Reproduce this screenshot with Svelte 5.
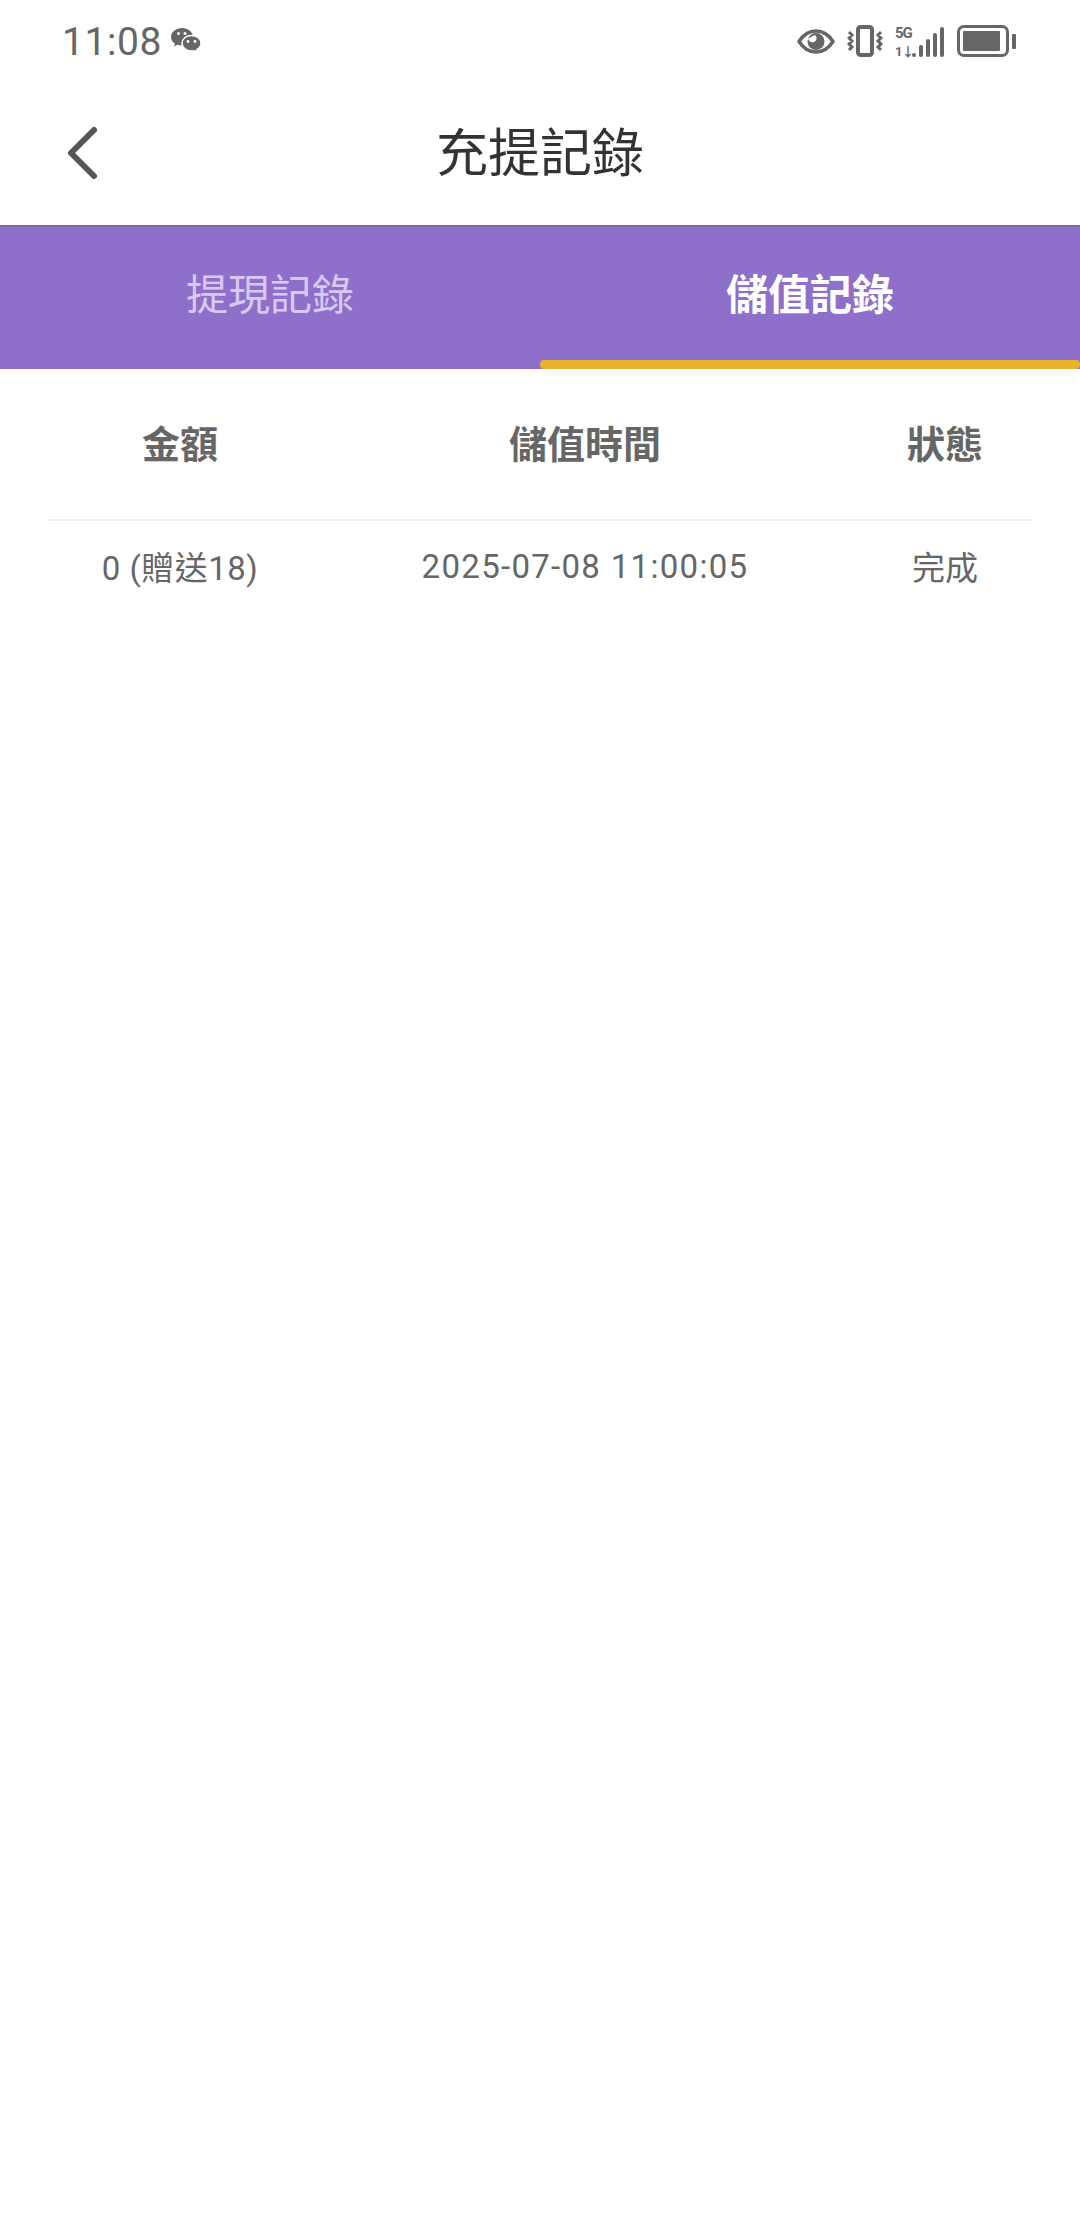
<script>
    let tabs = [
        { label: "提現記錄", active: false },
        { label: "儲值記錄", active: true }
    ];
    let rows = [{ amount: "0 (贈送18)", time: "2025-07-08 11:00:05", status: "完成" }];
    let bars = [4, 12, 18, 24, 30];
</script>

<div class="page">
    <div class="statusbar">
        <div class="left">
            <span class="clock">11:08</span>
            <svg class="wechat" width="30" height="26" viewBox="0 0 30 26" fill="#666">
                <path d="M11 0C5 0 0 4 0 9c0 2.700 1.500 5 3.800 6.600L3 18.500l3.400-1.700c1.400.4 2.900.6 4.600.6 6 0 11-3.800 11-8.400C22 4 17 0 11 0z" />
                <path d="M20.500 7.500c-5.200 0-9.500 3.500-9.500 7.800s4.300 7.800 9.500 7.800c1 0 2-.1 2.900-.4l2.900 2.300-.5-3.300c2.500-1.400 4.200-3.800 4.200-6.400 0-4.300-4.300-7.800-9.500-7.800z" stroke="#fff" stroke-width="1.500" />
                <circle cx="7.500" cy="5.500" r="1.500" fill="#fff" />
                <circle cx="14" cy="5.500" r="1.500" fill="#fff" />
                <circle cx="17" cy="13.500" r="1.400" fill="#fff" />
                <circle cx="24" cy="13.500" r="1.400" fill="#fff" />
            </svg>
        </div>
        <div class="right">
            <svg width="38" height="25" viewBox="0 0 38 25">
                <path d="M2 12.500C6.500 5.500 12 2 19 2s12.500 3.500 17 10.500C31.500 19.500 26 23 19 23S6.500 19.500 2 12.500z" fill="none" stroke="#666" stroke-width="3.500" stroke-linejoin="round" />
                <circle cx="19" cy="12.500" r="8.500" fill="#666" />
                <path d="M11 9.500a4.500 4.500 0 0 0 6 3.500 4 4 0 0 0 1-7z" fill="#fff" />
            </svg>
            <svg width="36" height="32" viewBox="0 0 36 32" fill="none" stroke="#666">
                <rect x="11" y="2" width="14" height="28" rx="2.500" stroke-width="4" />
                <path d="M2 7l3 3-3 3 3 3-3 3 3 3-3 3M34 7l-3 3 3 3-3 3 3 3-3 3 3 3" stroke-width="3" />
            </svg>
            <div class="signal">
                <div class="net"><span>5G</span><span class="arrows">1↓</span></div>
                <div class="bars">
                    {#each bars as h}
                        <i style="height: {h}px"></i>
                    {/each}
                </div>
            </div>
            <div class="battery">
                <div class="shell"><div class="level"></div></div>
                <div class="cap"></div>
            </div>
        </div>
    </div>

    <header class="nav">
        <svg class="back" width="34" height="56" viewBox="0 0 34 56" fill="none">
            <path d="M29 5L6 28l23 23" stroke="#555" stroke-width="6" stroke-linecap="round" stroke-linejoin="round" />
        </svg>
        <h1>充提記錄</h1>
    </header>

    <nav class="tabs">
        {#each tabs as tab}
            <div class="tab" class:active={tab.active}>{tab.label}</div>
        {/each}
    </nav>

    <div class="table">
        <div class="row head">
            <div>金額</div>
            <div>儲值時間</div>
            <div>狀態</div>
        </div>
        {#each rows as row}
            <div class="row item">
                <div class="amount">{row.amount}</div>
                <div class="time">{row.time}</div>
                <div>{row.status}</div>
            </div>
        {/each}
    </div>
</div>

<style>
    :global(body) {
        background: #fff;
    }
    .page {
        height: 2222px;
        background: #fff;
        font-family: Roboto, "Noto Sans CJK TC", sans-serif;
        overflow: hidden;
    }
    .statusbar {
        height: 84px;
        padding: 0 64px 0 62px;
        display: flex;
        justify-content: space-between;
        align-items: center;
        color: #666;
    }
    .left {
        display: flex;
        align-items: center;
        gap: 9px;
    }
    .clock {
        font-size: 39px;
        line-height: 84px;
        letter-spacing: 0.6px;
    }
    .wechat {
        margin-top: -2px;
    }
    .right {
        display: flex;
        align-items: center;
        gap: 12px;
        margin-top: -2px;
    }
    .signal {
        display: flex;
        align-items: flex-end;
        gap: 1px;
        height: 32px;
    }
    .net {
        display: flex;
        flex-direction: column;
        justify-content: space-between;
        height: 31px;
        width: 16px;
        font-size: 15px;
        font-weight: 700;
        line-height: 14px;
        letter-spacing: -1px;
    }
    .arrows {
        font-size: 13px;
        line-height: 11px;
    }
    .bars {
        display: flex;
        align-items: flex-end;
        gap: 3px;
    }
    .bars i {
        display: block;
        width: 4px;
        background: #666;
        border-radius: 2px;
    }
    .battery {
        display: flex;
        align-items: center;
        gap: 3px;
        margin-left: 1px;
    }
    .shell {
        width: 52px;
        height: 32px;
        box-sizing: border-box;
        border: 3px solid #666;
        border-radius: 7px;
        padding: 3px;
    }
    .level {
        height: 100%;
        width: 37px;
        background: #666;
        border-radius: 1px;
    }
    .cap {
        width: 4px;
        height: 15px;
        background: #666;
        border-radius: 1px;
    }
    .nav {
        height: 141px;
        position: relative;
        display: flex;
        align-items: center;
        justify-content: center;
    }
    .nav h1 {
        margin: 0 0 10px;
        font-size: 52px;
        font-weight: 400;
        color: #333;
    }
    .back {
        position: absolute;
        left: 65px;
        top: 41px;
    }
    .tabs {
        height: 144px;
        box-sizing: border-box;
        display: flex;
        background: #8e70cb;
        border-top: 2px solid #7c6a9e;
    }
    .tab {
        flex: 1;
        display: flex;
        align-items: center;
        justify-content: center;
        padding-bottom: 14px;
        font-size: 42px;
        color: #d8c9f3;
        box-sizing: border-box;
        position: relative;
    }
    .tab.active {
        color: #fff;
        font-weight: 700;
    }
    .tab.active::after {
        content: "";
        position: absolute;
        left: 0;
        right: 0;
        bottom: 0;
        height: 9px;
        background: #e8b22e;
        border-radius: 4px;
    }
    .table {
        margin: 0 48px;
    }
    .row {
        display: grid;
        grid-template-columns: 264px 546px 1fr;
        text-align: center;
        color: #666;
    }
    .head {
        height: 152px;
        box-sizing: border-box;
        padding-bottom: 6px;
        align-items: center;
        font-size: 38px;
        font-weight: 700;
        border-bottom: 2px solid #eee;
    }
    .item {
        height: 90px;
        align-items: center;
        font-size: 33px;
    }
    .amount {
        letter-spacing: 0.5px;
    }
    .time {
        letter-spacing: 1.3px;
    }
</style>
